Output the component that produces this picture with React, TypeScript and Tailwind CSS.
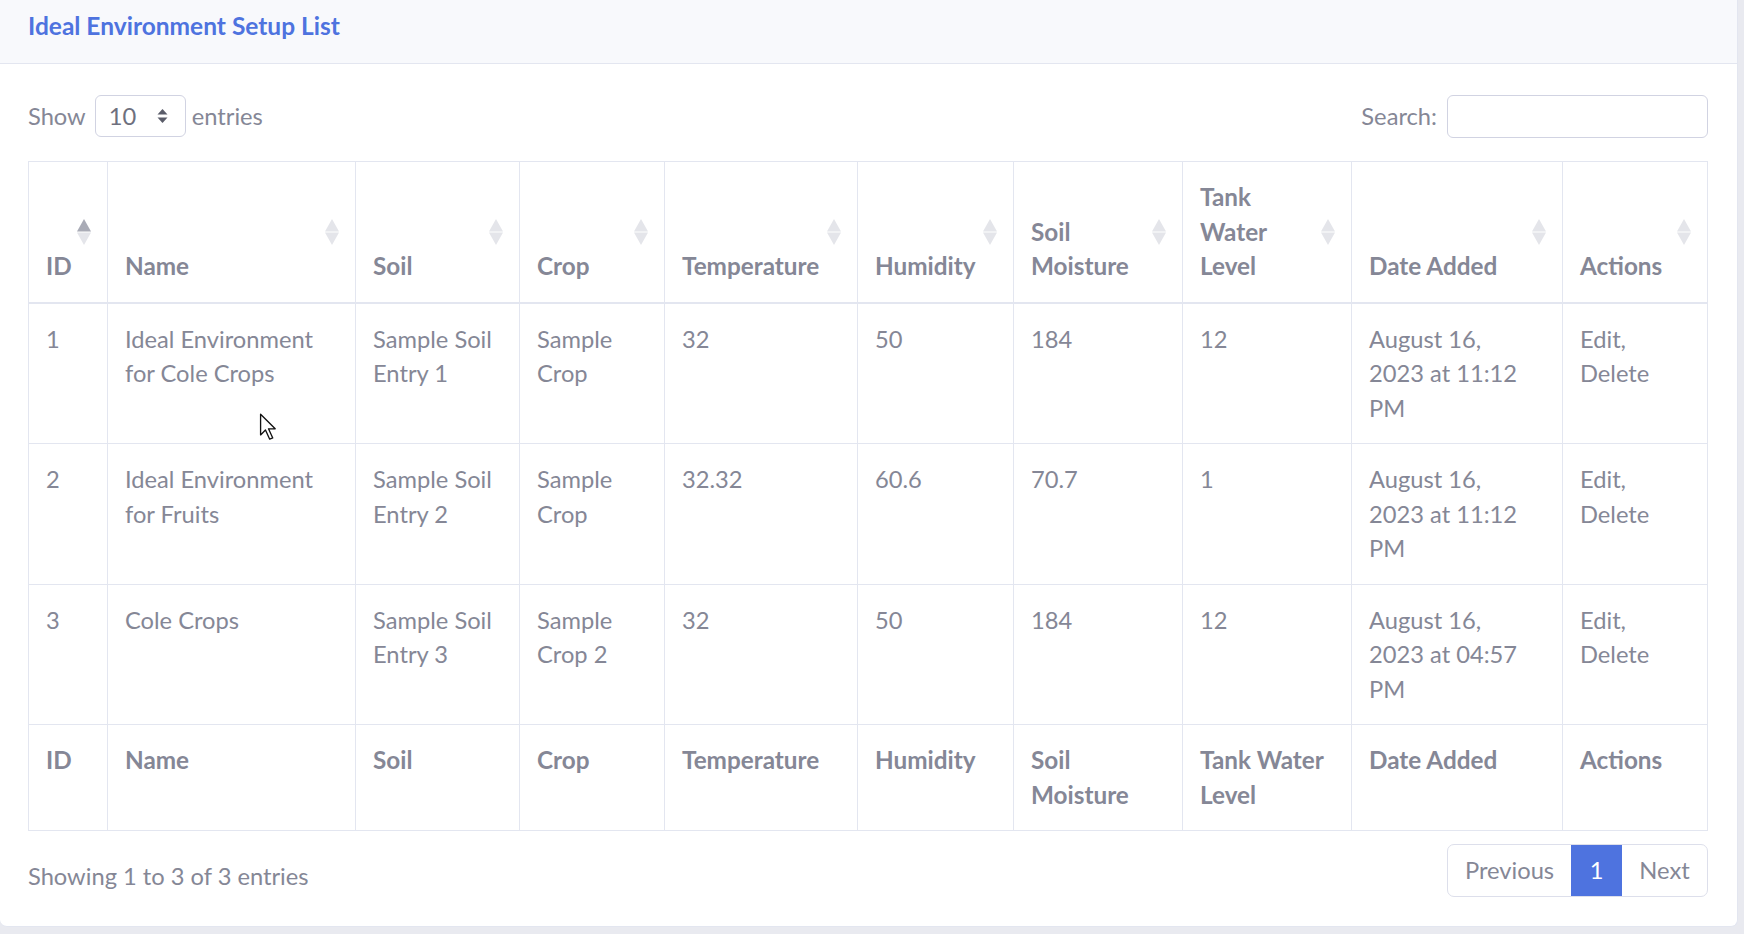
const COLUMNS = [
  { key: "id", label: "ID", width: "w-[79px]" },
  { key: "name", label: "Name", width: "w-[248px]" },
  { key: "soil", label: "Soil", width: "w-[164px]" },
  { key: "crop", label: "Crop", width: "w-[145px]" },
  { key: "temperature", label: "Temperature", width: "w-[193px]" },
  { key: "humidity", label: "Humidity", width: "w-[156px]" },
  { key: "moisture", label: "Soil Moisture", width: "w-[169px]" },
  { key: "tank", label: "Tank Water Level", width: "w-[169px]" },
  { key: "date", label: "Date Added", width: "w-[211px]" },
  { key: "actions", label: "Actions", width: "" },
];

const ROWS = [
  {
    id: 1,
    name: "Ideal Environment for Cole Crops",
    soil: "Sample Soil Entry 1",
    crop: "Sample Crop",
    temperature: "32",
    humidity: "50",
    moisture: "184",
    tank: "12",
    date: ["August 16,", "2023 at 11:12", "PM"],
  },
  {
    id: 2,
    name: "Ideal Environment for Fruits",
    soil: "Sample Soil Entry 2",
    crop: "Sample Crop",
    temperature: "32.32",
    humidity: "60.6",
    moisture: "70.7",
    tank: "1",
    date: ["August 16,", "2023 at 11:12", "PM"],
  },
  {
    id: 3,
    name: "Cole Crops",
    soil: "Sample Soil Entry 3",
    crop: "Sample Crop 2",
    temperature: "32",
    humidity: "50",
    moisture: "184",
    tank: "12",
    date: ["August 16,", "2023 at 04:57", "PM"],
  },
];

function SortIcon({ active }: { active?: boolean }) {
  return (
    <svg
      className="absolute right-[16px] top-1/2 -translate-y-1/2"
      width="14"
      height="26"
      viewBox="0 0 14 26"
    >
      <polygon points="7,0 14,12.5 0,12.5" fill={active ? "#a9abb6" : "#e4e5ea"} />
      <polygon points="0,13.5 14,13.5 7,26" fill="#e4e5ea" />
    </svg>
  );
}

export default function App() {
  const cell = "border border-[#e3e6f0] px-[17px] py-[18px]";

  return (
    <div
      className="relative h-screen bg-[#e9eaf0] text-[#858796] text-[23.7px] leading-[34.5px]"
      style={{ fontFamily: "Lato, 'Open Sans', sans-serif" }}
    >
      <div className="w-[1738px] h-[927px] bg-white rounded-b-[7px] border-r border-b border-[#e3e6f0] flex flex-col">
        {/* Card header */}
        <div className="h-[64px] shrink-0 bg-[#f8f9fc] border-b border-[#e3e6f0] px-[28px] pt-[9px]">
          <h6 className="text-[24.5px] leading-[34px] font-bold text-[#4e73df]">
            Ideal Environment Setup List
          </h6>
        </div>

        {/* Card body */}
        <div className="pl-[28px] pr-[29px] pt-[31px]">
          <div className="flex items-center justify-between h-[42px]">
            <div className="flex items-center">
              <span>Show</span>
              <div className="ml-[9px] mr-[6px] w-[91px] h-[42px] border border-[#d1d3e2] rounded-[6px] flex items-center justify-between pl-[13px] pr-[17px]">
                <span className="text-[#6e707e]">10</span>
                <svg width="11" height="16" viewBox="0 0 11 16">
                  <polygon points="5.5,1 10.5,6.5 0.5,6.5" fill="#5a5c69" />
                  <polygon points="0.5,9.5 10.5,9.5 5.5,15" fill="#5a5c69" />
                </svg>
              </div>
              <span>entries</span>
            </div>
            <div className="flex items-center">
              <span>Search:</span>
              <div className="ml-[10px] w-[261px] h-[43px] border border-[#d1d3e2] rounded-[6px]" />
            </div>
          </div>

          <table className="mt-[24px] w-full table-fixed border-collapse">
            <colgroup>
              {COLUMNS.map((c) => (
                <col key={c.key} className={c.width} />
              ))}
            </colgroup>
            <thead>
              <tr>
                {COLUMNS.map((c, i) => (
                  <th
                    key={c.key}
                    className={`${cell} relative pr-[43px] border-b-2 text-left align-bottom font-bold text-[24.3px]`}
                  >
                    {c.label}
                    <SortIcon active={i === 0} />
                  </th>
                ))}
              </tr>
            </thead>
            <tbody>
              {ROWS.map((r) => (
                <tr key={r.id}>
                  <td className={`${cell} align-top`}>{r.id}</td>
                  <td className={`${cell} align-top`}>{r.name}</td>
                  <td className={`${cell} align-top`}>{r.soil}</td>
                  <td className={`${cell} align-top`}>{r.crop}</td>
                  <td className={`${cell} align-top`}>{r.temperature}</td>
                  <td className={`${cell} align-top`}>{r.humidity}</td>
                  <td className={`${cell} align-top`}>{r.moisture}</td>
                  <td className={`${cell} align-top`}>{r.tank}</td>
                  <td className={`${cell} align-top`}>
                    {r.date.map((line) => (
                      <div key={line}>{line}</div>
                    ))}
                  </td>
                  <td className={`${cell} align-top`}>Edit, Delete</td>
                </tr>
              ))}
            </tbody>
            <tfoot>
              <tr>
                {COLUMNS.map((c) => (
                  <th key={c.key} className={`${cell} text-left align-top font-bold text-[24.3px]`}>
                    {c.label}
                  </th>
                ))}
              </tr>
            </tfoot>
          </table>

          <div className="mt-[13px] flex items-start justify-between">
            <div className="pt-[15px]">Showing 1 to 3 of 3 entries</div>
            <div className="flex h-[53px] border border-[#dddfeb] rounded-[7px] overflow-hidden">
              <div className="w-[123px] flex items-center justify-center">Previous</div>
              <div className="w-[51px] flex items-center justify-center bg-[#4e73df] text-white">1</div>
              <div className="w-[85px] flex items-center justify-center">Next</div>
            </div>
          </div>
        </div>
      </div>

      {/* mouse pointer */}
      <svg className="absolute left-[259px] top-[413px]" width="19" height="28" viewBox="0 0 15 23">
        <path
          d="M1 1 L1 18 L5 14 L8.5 21.5 L11 20.5 L7.5 13 L13 13 Z"
          fill="#ffffff"
          stroke="#111111"
          strokeWidth="1.1"
          strokeLinejoin="round"
        />
      </svg>
    </div>
  );
}
